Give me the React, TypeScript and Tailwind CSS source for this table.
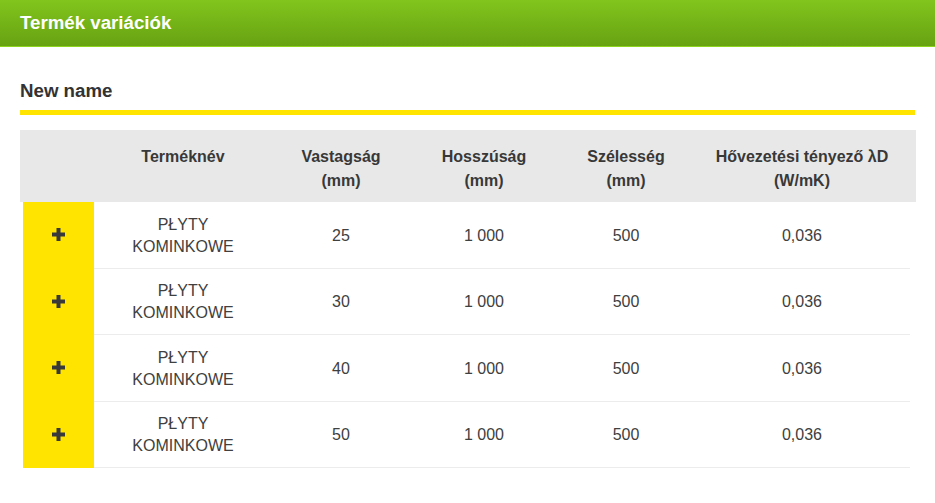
const rows = [
  { name: "PŁYTY KOMINKOWE", thickness: "25", length: "1 000", width: "500", lambda: "0,036" },
  { name: "PŁYTY KOMINKOWE", thickness: "30", length: "1 000", width: "500", lambda: "0,036" },
  { name: "PŁYTY KOMINKOWE", thickness: "40", length: "1 000", width: "500", lambda: "0,036" },
  { name: "PŁYTY KOMINKOWE", thickness: "50", length: "1 000", width: "500", lambda: "0,036" },
];

const cols = "grid grid-cols-[71px_178px_138px_148px_136px_216px]";
const cell = "flex items-center justify-center pt-[2px] border-b border-[#ececec]";

const PlusIcon = () => (
  <svg width="13" height="13" viewBox="0 0 13 13" className="text-[#393939]">
    <rect x="4.5" y="0" width="4" height="13" fill="currentColor" />
    <rect x="0" y="4.5" width="13" height="4" fill="currentColor" />
  </svg>
);

const App = () => {
  return (
    <div className="w-[935px] h-[503px] bg-white font-['Liberation_Sans',Arial,sans-serif] overflow-hidden">
      <header className="h-[47px] flex items-center pl-[20px] bg-gradient-to-b from-[#82c51d] to-[#67a212] border-b border-[#8ed520]">
        <h1 className="text-[18.7px] font-bold text-white">Termék variációk</h1>
      </header>

      <section className="px-[20px] pt-[33px]">
        <h2 className="text-[18.7px] font-bold text-[#333] leading-[22px]">New name</h2>
        <div className="mt-[8px] h-[5px] bg-[#ffe400]" />

        <div className="mt-[15px] w-[896px]">
          <div className={`${cols} h-[72px] bg-[#e8e8e8] pl-[3px] pt-[15px] text-[16px] font-bold leading-[24px] text-[#383838] text-center`}>
            <div />
            <div>Terméknév</div>
            <div>
              Vastagság
              <br />
              (mm)
            </div>
            <div>
              Hosszúság
              <br />
              (mm)
            </div>
            <div>
              Szélesség
              <br />
              (mm)
            </div>
            <div>
              Hővezetési tényező λD
              <br />
              (W/mK)
            </div>
          </div>

          <ul className="ml-[3px] w-[887px]">
            {rows.map((row) => (
              <li
                key={row.thickness}
                className={`${cols} h-[66.5px] text-[16px] leading-[22px] text-[#404040] text-center`}
              >
                <div className="bg-[#ffe400] flex items-center justify-center pb-[1px]">
                  <PlusIcon />
                </div>
                <div className={`${cell} px-[30px]`}>{row.name}</div>
                <div className={cell}>{row.thickness}</div>
                <div className={cell}>{row.length}</div>
                <div className={cell}>{row.width}</div>
                <div className={cell}>{row.lambda}</div>
              </li>
            ))}
          </ul>
        </div>
      </section>
    </div>
  );
};

export default App;
